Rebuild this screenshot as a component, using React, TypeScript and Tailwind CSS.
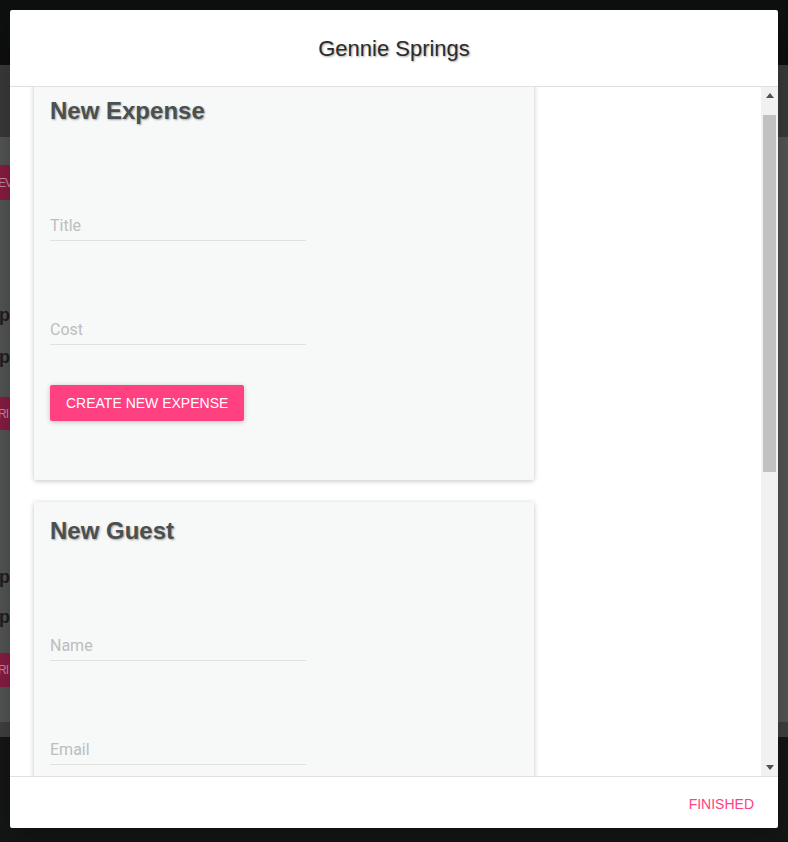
import React from "react";

function Field({ label, height }: { label: string; height: number }) {
  return (
    <div className="flex flex-col justify-end" style={{ height }}>
      <span className="font-['Roboto',sans-serif] text-[16px] leading-[24px] text-[#bdbdbd]">{label}</span>
      <div className="mt-[2px] h-px w-[256px] bg-[#e0e0e0]" />
    </div>
  );
}

function Card({ title, fields, button }: { title: string; fields: string[]; button?: string }) {
  return (
    <div className="w-[500px] h-[398px] shrink-0 bg-[#f7f8f8] px-4 pt-[13px] rounded-[2px] shadow-[0_1px_6px_rgba(0,0,0,0.12),0_1px_4px_rgba(0,0,0,0.12)]">
      <h2 className="font-['Liberation_Sans',Arial,sans-serif] font-bold text-[24px] leading-[32px] text-[#4a4f4f] [text-shadow:1px_1px_2px_rgba(0,0,0,0.35)]">
        {title}
      </h2>
      <Field label={fields[0]} height={114} />
      <Field label={fields[1]} height={104} />
      {button && (
        <button className="mt-[40px] h-[36px] px-4 rounded-[2px] bg-[#ff4081] text-white font-['Liberation_Sans',Arial,sans-serif] text-[14px] uppercase shadow-[0_1px_6px_rgba(0,0,0,0.12),0_1px_4px_rgba(0,0,0,0.12)]">
          {button}
        </button>
      )}
    </div>
  );
}

function BgButton({ text, mt, h }: { text: string; mt: number; h: number }) {
  return (
    <div
      className="w-[10px] bg-[#8a1d45] overflow-hidden flex items-center text-[12px] text-[#c98aa3] leading-none whitespace-nowrap"
      style={{ marginTop: mt, height: h }}
    >
      <span className="-ml-[2px] tracking-[-1px]">{text}</span>
    </div>
  );
}

function BgP({ mt }: { mt: number }) {
  return (
    <div
      className="h-[22px] w-[10px] overflow-hidden text-[18px] font-bold text-[#1e1f1f] leading-[22px]"
      style={{ marginTop: mt }}
    >
      <span className="-ml-[1px]">p</span>
    </div>
  );
}

export default function App() {
  return (
    <div className="relative w-[788px] h-[842px] overflow-hidden bg-[#141615]">
      {/* background page under overlay */}
      <div className="flex flex-col">
        <div className="h-[65px] bg-[#0e100f]" />
        <div className="h-[72px] bg-[#3a3c3b]" />
        <div className="h-[585px] bg-[#555757] flex flex-col font-['Liberation_Sans',Arial,sans-serif]">
          <BgButton text="EV" mt={28} h={35} />
          <BgP mt={104} />
          <BgP mt={20} />
          <BgButton text="RI" mt={29} h={33} />
          <BgP mt={136} />
          <BgP mt={18} />
          <BgButton text="RI" mt={25} h={34} />
        </div>
        <div className="h-[15px] bg-[#404141]" />
        <div className="h-[105px] bg-[#151716]" />
      </div>

      {/* modal */}
      <div className="absolute left-[10px] top-[10px] w-[768px] h-[818px] bg-white rounded-[2px] flex flex-col overflow-hidden shadow-[0_10px_30px_rgba(0,0,0,0.3)]">
        <div className="h-[77px] shrink-0 border-b border-[#e0e0e0] flex items-center justify-center">
          <span className="font-['Liberation_Sans',Arial,sans-serif] text-[22px] text-[#2b2b2b] [text-shadow:1px_1px_2px_rgba(0,0,0,0.35)]">
            Gennie Springs
          </span>
        </div>
        <div className="h-[689px] shrink-0 flex">
          <div className="flex-1 overflow-hidden pl-6">
            <div className="-mt-[5px] flex flex-col gap-[22px] pb-6">
              <Card title="New Expense" fields={["Title", "Cost"]} button="Create New Expense" />
              <Card title="New Guest" fields={["Name", "Email"]} />
            </div>
          </div>
          <div className="w-[17px] shrink-0 bg-[#f1f1f1] flex flex-col">
            <div className="h-[17px] flex items-center justify-center">
              <svg width="8" height="5" viewBox="0 0 8 5">
                <polygon points="4,0 8,5 0,5" fill="#505050" />
              </svg>
            </div>
            <div className="flex-1 flex flex-col px-[2px] pt-[11px]">
              <div className="h-[357px] bg-[#c1c1c1]" />
            </div>
            <div className="h-[17px] flex items-center justify-center">
              <svg width="8" height="5" viewBox="0 0 8 5">
                <polygon points="0,0 8,0 4,5" fill="#505050" />
              </svg>
            </div>
          </div>
        </div>
        <div className="flex-1 border-t border-[#e0e0e0] flex items-center justify-end pr-6">
          <span className="font-['Liberation_Sans',Arial,sans-serif] text-[14px] text-[#ff4081] uppercase pt-[3px]">
            Finished
          </span>
        </div>
      </div>
    </div>
  );
}
